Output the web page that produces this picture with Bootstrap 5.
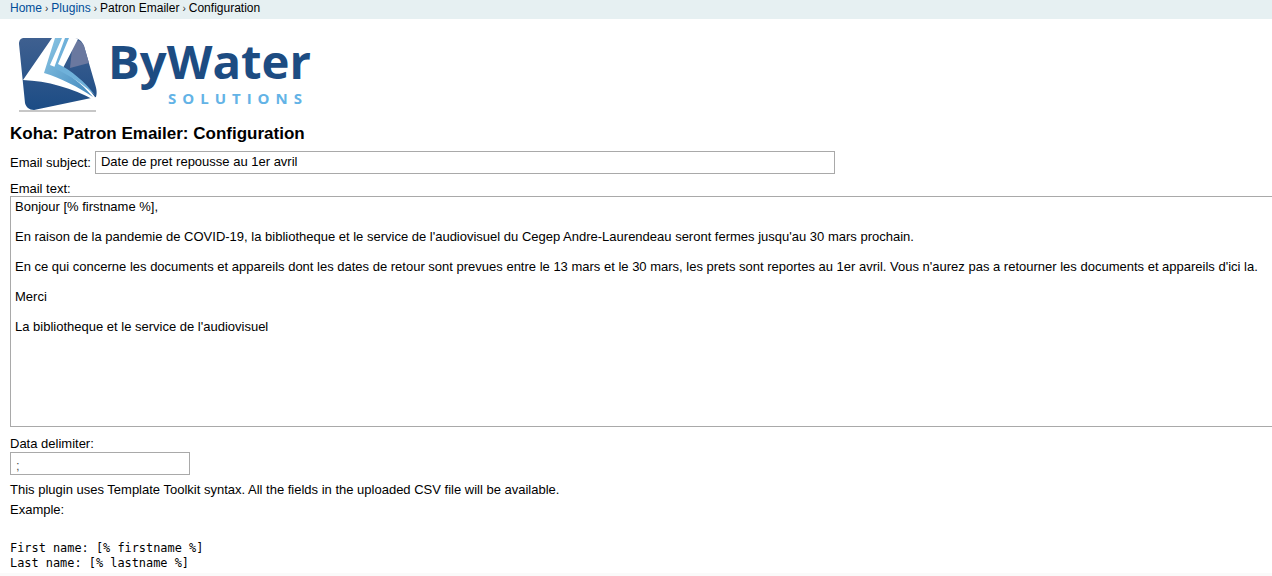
<!DOCTYPE html>
<html lang="en">
<head>
  <meta charset="UTF-8">
  <title>Koha: Patron Emailer: Configuration</title>
  <meta name="viewport" content="width=device-width, initial-scale=1">
  <link href="https://cdn.jsdelivr.net/npm/bootstrap@5.3.2/dist/css/bootstrap.min.css" rel="stylesheet">
  <style>
    html, body { overflow: hidden; }
    body {
      font-family: "Liberation Sans", Arial, sans-serif;
      font-size: 13px;
      line-height: 15px;
      color: #000;
      background: #fff;
    }
    .crumbs {
      background: #e6f0f2;
      height: 19px;
      padding: 0 10px;
      font-size: 12px;
      line-height: 16px;
    }
    .crumbs a { color: #004d99; text-decoration: none; }
    .crumbs .sep { font-size: 10px; padding: 0 3px; color: #333; }
    .logo-wrap { height: 98px; padding: 9px 0 0 17px; }
    .logo-wrap svg { display: block; }
    .page-body { padding: 0 10px; }
    .page-title { font-size: 17px; font-weight: 700; line-height: 20px; margin: 7px 0 7px; }
    .field-input {
      display: block;
      border: 1px solid #a9a9a9;
      border-radius: 0;
      padding: 1px 5px 4px;
      font-size: 13px;
      line-height: 15px;
      color: #000;
      background: #fff;
      height: 23px;
    }
    .subject-input { width: 740px; margin-left: 4px; }
    .email-block { margin-top: 7px; }
    .text-input {
      width: 1400px;
      height: 231px;
      padding: 2px 4px;
      resize: none;
      overflow: hidden;
      white-space: pre;
    }
    .delim-block { margin-top: 9px; }
    .delim-label { display: block; margin-bottom: 1px; }
    .delim-input { width: 180px; color: #555; padding-top: 4px; padding-bottom: 1px; }
    .help-line { margin: 7px 0 0; }
    .help-line + .help-line { margin-top: 5px; }
    .sample-code {
      font-family: "DejaVu Sans Mono", monospace;
      font-size: 11.9px;
      line-height: 15px;
      margin: 24px 0 0;
      color: #000;
      overflow: hidden;
    }
    .foot-band { background: #fafafa; height: 20px; margin-top: 2px; }
  </style>
</head>
<body>

<div class="crumbs">
  <a href="#">Home</a><span class="sep">›</span><a href="#">Plugins</a><span class="sep">›</span>Patron Emailer<span class="sep">›</span>Configuration
</div>

<div class="logo-wrap">
  <svg width="310" height="86" viewBox="0 -6 310 86" xmlns="http://www.w3.org/2000/svg">
    <defs>
      <linearGradient id="tileFill" x1="0" y1="0" x2="0" y2="1">
        <stop offset="0" stop-color="#3f6090"/>
        <stop offset="1" stop-color="#1c4c85"/>
      </linearGradient>
      <linearGradient id="stripeFill" x1="0" y1="0" x2="1" y2="1">
        <stop offset="0" stop-color="#8cc6e4"/>
        <stop offset="1" stop-color="#3f87bd"/>
      </linearGradient>
    </defs>
    <!-- tile -->
    <path d="M7 4 H56 C62 4 65 7 67 12 L78 50 C80 56 80 60 79 63 L17 76 C12 76 9 73 8 69 L2 10 C2 6 4 4 7 4 Z" fill="url(#tileFill)"/>
    <path d="M56 6 C62 6 65 8 67 12 L72 29 L53 34 Z" fill="#6a789f"/>
    <!-- white band sweeping from the top edge to the right corner -->
    <path d="M35 4 H57 C59 4 60 4 61 5 L46 34 C58 40 70 52 78 63 L77 66 C56 54 30 47 6 46 Z" fill="#fff"/>
    <!-- blue stripes -->
    <path d="M38 4 H45 L33 31 C50 37 65 50 76 63 C61 53 44 44 27 39 Z" fill="url(#stripeFill)"/>
    <path d="M48 4 H52 L41 30 C54 36 68 48 78 61 C66 50 52 41 37 34 Z" fill="#6fb1da"/>
    <path d="M2 77 H79" stroke="#8f8f8f" stroke-width="1"/>
    <!-- wordmark -->
    <text x="91" y="45" font-family="'Open Sans', sans-serif" font-weight="700" font-size="47" fill="#1d4c82" textLength="203" lengthAdjust="spacingAndGlyphs">ByWater</text>
    <text x="151" y="70" font-family="'Open Sans', sans-serif" font-weight="700" font-size="15" fill="#63b3e6" textLength="134">SOLUTIONS</text>
  </svg>
</div>

<div class="page-body">
  <h1 class="page-title">Koha: Patron Emailer: Configuration</h1>

  <div class="d-flex align-items-center">
    <label for="subject">Email subject:</label>
    <input id="subject" type="text" class="field-input subject-input" value="Date de pret repousse au 1er avril">
  </div>

  <div class="email-block">
    <label for="body-text" class="d-block">Email text:</label>
    <textarea id="body-text" class="field-input text-input">Bonjour [% firstname %],

En raison de la pandemie de COVID-19, la bibliotheque et le service de l'audiovisuel du Cegep Andre-Laurendeau seront fermes jusqu'au 30 mars prochain.

En ce qui concerne les documents et appareils dont les dates de retour sont prevues entre le 13 mars et le 30 mars, les prets sont reportes au 1er avril. Vous n'aurez pas a retourner les documents et appareils d'ici la.

Merci

La bibliotheque et le service de l'audiovisuel</textarea>
  </div>

  <div class="delim-block">
    <label for="delimiter" class="delim-label">Data delimiter:</label>
    <input id="delimiter" type="text" class="field-input delim-input" value=";">
  </div>

  <p class="help-line">This plugin uses Template Toolkit syntax. All the fields in the uploaded CSV file will be available.</p>
  <p class="help-line">Example:</p>

  <pre class="sample-code">First name: [% firstname %]
Last name: [% lastname %]</pre>
</div>
<div class="foot-band"></div>

<script src="https://cdn.jsdelivr.net/npm/bootstrap@5.3.2/dist/js/bootstrap.bundle.min.js"></script>
</body>
</html>
